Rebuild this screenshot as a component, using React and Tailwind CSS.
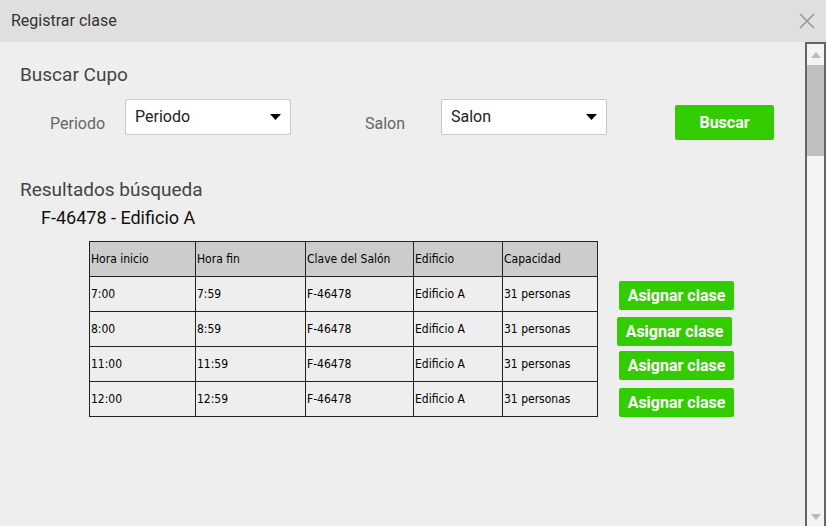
import React from "react";

const rows = [
  { start: "7:00", end: "7:59", mt: "mt-[5px]", ml: "ml-[21px]" },
  { start: "8:00", end: "8:59", mt: "mt-[7px]", ml: "ml-[19px]" },
  { start: "11:00", end: "11:59", mt: "mt-[5px]", ml: "ml-[21px]" },
  { start: "12:00", end: "12:59", mt: "mt-[8px]", ml: "ml-[21px]" },
];

const cols = ["Hora inicio", "Hora fin", "Clave del Salón", "Edificio", "Capacidad"];
const widths = ["w-[106px]", "w-[110px]", "w-[108px]", "w-[89px]", "w-[95px]"];

function Caret() {
  return (
    <svg width="11" height="6" viewBox="0 0 11 6" className="fill-black">
      <path d="M0 0h11L5.5 6z" />
    </svg>
  );
}

function Select({ label }) {
  return (
    <div className="w-[166px] h-[36px] bg-white border border-[#c8c8c8] rounded-[2px] flex items-center justify-between pl-[9px] pr-[9px] text-[16px] text-[#222]">
      <span>{label}</span>
      <Caret />
    </div>
  );
}

export default function App() {
  return (
    <div
      className="w-[826px] h-[526px] flex flex-col bg-[#eeeeee] overflow-hidden"
      style={{ fontFamily: "Roboto, 'Liberation Sans', sans-serif" }}
    >
      <div className="h-[42px] shrink-0 bg-[#dfdfdf] flex items-center justify-between pl-[11px] pr-[11px]">
        <span className="text-[16px] text-[#333]">Registrar clase</span>
        <svg width="16" height="16" viewBox="0 0 16 16" className="stroke-[#999]" strokeWidth="1.6">
          <path d="M1 1l14 14M15 1L1 15" />
        </svg>
      </div>

      <div className="flex flex-1 min-h-0">
        <div className="flex-1 pl-[20px] pt-[21px]">
          <h2 className="text-[19px] text-[#444] leading-[24px]">Buscar Cupo</h2>

          <div className="flex items-start mt-[12px]">
            <span className="w-[105px] pl-[30px] pt-[15px] text-[16px] leading-[20px] text-[#666]">Periodo</span>
            <Select label="Periodo" />
            <span className="w-[150px] pl-[74px] pt-[15px] text-[16px] leading-[20px] text-[#666]">Salon</span>
            <Select label="Salon" />
            <button className="ml-[68px] mt-[6px] w-[99px] h-[35px] bg-[#33cc00] rounded-[2px] text-white font-bold text-[16px]">
              Buscar
            </button>
          </div>

          <h2 className="mt-[38px] text-[19px] text-[#444] leading-[24px]">Resultados búsqueda</h2>
          <h3 className="mt-[5px] ml-[21px] text-[18px] text-[#111] leading-[22px]">F-46478 - Edificio A</h3>

          <div className="flex items-start mt-[12px] ml-[69px]">
            <table
              className="border-collapse border-[1.5px] border-[#222] text-[12px] text-black"
              style={{ fontFamily: "'Comic Sans MS', 'DejaVu Sans Condensed', 'DejaVu Sans', sans-serif" }}
            >
              <thead>
                <tr className="bg-[#cccccc] h-[35px]">
                  {cols.map((c, i) => (
                    <th key={c} className={`${widths[i]} border-[1.5px] border-[#222] font-normal text-left pl-[1px] align-middle`}>
                      {c}
                    </th>
                  ))}
                </tr>
              </thead>
              <tbody>
                {rows.map((r) => (
                  <tr key={r.start} className="h-[35px]">
                    {[r.start, r.end, "F-46478", "Edificio A", "31 personas"].map((v, i) => (
                      <td key={i} className="border-[1.5px] border-[#222] pl-[1px] align-middle">
                        {v}
                      </td>
                    ))}
                  </tr>
                ))}
              </tbody>
            </table>

            <div className="flex flex-col pt-[35px]">
              {rows.map((r) => (
                <button
                  key={r.start}
                  className={`${r.mt} ${r.ml} w-[115px] h-[29px] bg-[#33cc00] rounded-[2px] text-white font-bold text-[16px]`}
                >
                  Asignar clase
                </button>
              ))}
            </div>
          </div>
        </div>

        <div className="w-[21px] shrink-0 border-l-2 border-t-2 border-r-2 border-[#666] bg-[#f4f4f4] flex flex-col">
          <div className="h-[21px] flex items-center justify-center">
            <svg width="10" height="6" viewBox="0 0 10 6" className="fill-[#bbb]">
              <path d="M0 6h10L5 0z" />
            </svg>
          </div>
          <div className="h-[91px] bg-[#c0c0c0]" />
          <div className="flex-1" />
          <div className="h-[18px] flex items-center justify-center">
            <svg width="10" height="6" viewBox="0 0 10 6" className="fill-[#bbb]">
              <path d="M0 0h10L5 6z" />
            </svg>
          </div>
        </div>
      </div>
    </div>
  );
}
